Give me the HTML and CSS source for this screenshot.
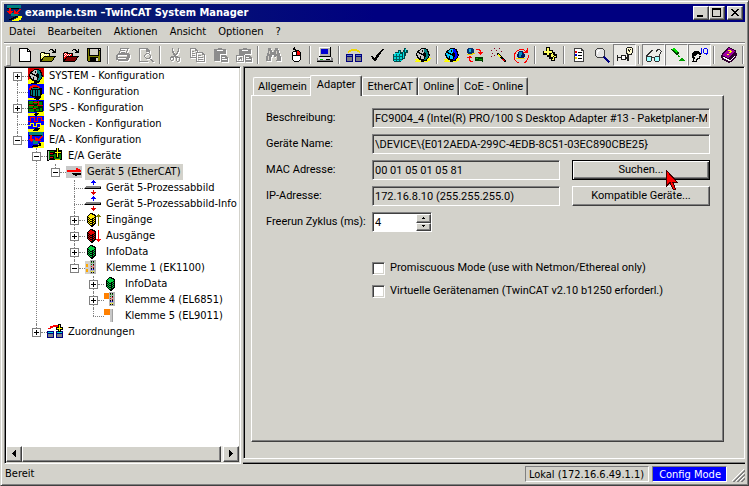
FILE: index.html
```
<!DOCTYPE html>
<html lang="de">
<head>
    <meta charset="UTF-8">
    <meta name="viewport" content="width=device-width, initial-scale=1.0">
    <title>example.tsm - TwinCAT System Manager</title>
    <link rel="stylesheet" href="styles.css">
</head>
<body>
    <!-- Shared icons -->
    <svg class="sprite" aria-hidden="true">
        <symbol id="stack" viewBox="0 0 16 16">
            <path d="M6 1h3v1h2v1h1v9h-1v1h-1v1h-1v1H7v-1H6v-1H5v-1H4v-1H3V4h1V3h1V2h1z" fill="#000"/>
            <path d="M6 2h2v1h2v1h1v1h-1v1H8v1H6V6H5V5H4V4h1V3h1z" fill="currentColor"/>
            <path d="M4 6h1v1h1v1h2v1H6V8H5V7H4zM10 6h1v1h-1v1H9V7h1zM4 8h1v1h1v1h2v1H6v-1H5V9H4zM10 8h1v1h-1v1H9V9h1zM4 10h1v1h1v1h2v1H6v-1H5v-1H4zM10 10h1v1h-1v1H9v-1h1z" fill="currentColor"/>
        </symbol>
        <symbol id="image" viewBox="0 0 16 16">
            <path d="M8 0h1v1h1v1h1v1H9v2H8V3H6V2h1V1h1z" fill="#00f"/>
            <path d="M1 6h15v1h-1v1H0V7h1z" fill="#808080"/>
            <path d="M0 8h15V7h1v2H0z" fill="#000"/>
            <path d="M8 10h1v2h2v1h-1v1H9v1H8v-1H7v-1H6v-1h2z" fill="#e00000"/>
        </symbol>
        <symbol id="gear" viewBox="0 0 16 16">
            <path d="M0 12h4l1 2h6l2-3h3v1h-1v2h-2v1H0v-1h1z" fill="#ff0"/>
            <path d="M6 1h5v1h2v2h1v3h1v2h-1v2h-1v1h-1v2H9v1H6v-2H4v-1H3v-1H2V9H1V6h1V4h1V3h2V2h1z" fill="#000"/>
            <path d="M6 2h3v4H8v3h1v3H6v-1H4v-1H3V8H2V6h1V4h2V3h1z" fill="currentColor"/>
            <path d="M9 2h2v1h1v2h1v3h1v1h-1v2h-1v1h-1v1H9v-1h1v-2h1V6h-1V5H9z" fill="var(--rim)"/>
            <path d="M3 4h1v1h1v1h2v1h1v1H6V7H4V6H3zM7 3h1v2H7zM5 9h1v2H5z" fill="#000"/>
        </symbol>
        <symbol id="folder" viewBox="0 0 16 16">
            <path d="M1 5h4v1h5v3h6v1h-1v1h-1v2h-1v1h-1v1H0V6h1zM9 3h1V2h3v1h1v1h1V2h1v4h-4V5h1V4h-1V3h-2v1H9z" fill="#000"/>
            <path d="M1 6h3v1h5v2H4v1H3v1H2v1H1z" fill="var(--light)"/>
            <path d="M4 10h10v1h-1v2h-1v1H2v-1h1v-2h1z" fill="currentColor"/>
            <path d="M2 6h1v1H2zM1 7h1v1H1zM3 7h1v1H3zM2 8h1v1H2zM5 7h1v1H5zM4 8h1v1H4zM7 7h1v1H7zM6 8h1v1H6zM1 9h1v1H1z" fill="#fff"/>
        </symbol>
        <symbol id="terminal" viewBox="0 0 16 16">
            <path d="M0 1h9v13H0z" fill="#d4d0c8"/>
            <path d="M5 0h6v14H5z" fill="#b4b4b4"/>
            <path d="M6 2h1v1H6zM8 2h1v1H8zM6 4h1v1H6z" fill="#008000"/>
            <path d="M6 6h1v1H6zM8 5h1v1H8zM8 7h1v1H8z" fill="#e00000"/>
            <path d="M6 9h1v1H6zM8 9h1v1H8z" fill="#0000c0"/>
            <path d="M6 11h1v1H6zM8 11h1v1H8z" fill="#ff0"/>
            <path d="M6 1h1v1H6zM8 1h1v1H8zM8 4h1v1H8zM6 8h1v1H6zM8 8h1v1H8zM6 12h1v1H6zM8 12h1v1H8z" fill="#000"/>
        </symbol>
    </svg>

    <div class="window">
        <header class="titlebar">
            <svg class="icon" viewBox="0 0 16 16">
                <rect width="16" height="16" fill="#0a246a"/>
                <path d="M1 0h14v3H1z" fill="#008080"/><path d="M1 3h12v1H1z" fill="#000"/>
                <path d="M5 8h7v3H5z" fill="#008080"/>
                <path d="M3 3h2v3h2v1H6v1H5v1H3V8H2V7H1V6h2zM13 4h2v1h-1v1h-1v1h-1v1h1v1H8V5h1v1h1v1h1V6h1V5h1z" fill="#f00"/>
                <path d="M12 11h4v2h-1v2h-2v1H6v-1h2v-1h2v-1h2z" fill="#ff0"/><path d="M9 11h3v1h-2v1H8v1H6v1H3v-1h2v-1h2v-1h2z" fill="#000"/>
            </svg>
            <h1>example.tsm –TwinCAT System Manager</h1>
            <div class="caption-buttons">
                <button type="button" aria-label="Minimieren"><svg viewBox="0 0 12 10"><path d="M2 7h6v2H2z"/></svg></button>
                <button type="button" aria-label="Maximieren"><svg viewBox="0 0 12 10"><path d="M1 0h9v9H1zM2 2v6h7V2z" fill-rule="evenodd"/></svg></button>
                <button type="button" class="close" aria-label="Schließen"><svg viewBox="0 0 12 10"><path d="M2 1h2v1h1v1h2V2h1V1h2v1H9v1H8v1H7v1h1v1h1v1h1v1H8V7H7V6H5v1H4v1H2V7h1V6h1V5h1V4H4V3H3V2H2z"/></svg></button>
            </div>
        </header>

        <nav class="menubar">
            <a href="#">Datei</a>
            <a href="#">Bearbeiten</a>
            <a href="#">Aktionen</a>
            <a href="#">Ansicht</a>
            <a href="#">Optionen</a>
            <a href="#">?</a>
        </nav>

        <div class="toolbar">
            <button type="button" aria-label="Neu"><svg class="icon" viewBox="0 0 16 16"><path d="M2 1h9v1h1v1h1v1h1v11H2z" fill="#000"/><path d="M3 2h7v3h3v9H3zM11 3h1v1h-1z" fill="#fff"/></svg></button>
            <button type="button" aria-label="Öffnen"><svg class="icon folder-yellow"><use href="#folder"/></svg></button>
            <button type="button" aria-label="Vom Zielsystem öffnen"><svg class="icon folder-red"><use href="#folder"/></svg></button>
            <button type="button" aria-label="Speichern"><svg class="icon" viewBox="0 0 16 16"><path d="M1 1h14v14H2v-1H1z" fill="#000"/><path d="M2 2h1v7h10V4h1v10H2z" fill="#808000"/><path d="M4 2h8v6H4z" fill="#d4d0c8"/><path d="M4 10h8v4H4z" fill="#000"/><path d="M10 11h2v3h-2zM13 2h1v1h-1z" fill="#d4d0c8"/></svg></button>
            <span class="sep"></span>
            <button type="button" aria-label="Drucken" disabled><svg class="icon" viewBox="0 0 16 16"><path d="M5 1h9v1h-1v2h-1v2h2v1h1v4h-1v2h-1v1H3v-1H1V8h1V7h1V6h1V4h1zM6 2v2H5v2h6V4h1V2zM3 8v2h9V8zM3 11v1h8v-1z" fill-rule="evenodd"/><path d="M6 3h4v1H6zM6 5h4v1H6z"/></svg></button>
            <button type="button" aria-label="Seitenansicht" disabled><svg class="icon" viewBox="0 0 16 16"><path d="M1 1h9v1h1v1h1v3h-1V5H8V2H2v12h8v1H1z"/><path d="M8 6h3v1h1v1h1v3h-1v1h2v1h1v1h1v1h-2v-1h-1v-1h-1v-1H8v-1H7V10H6V8h1V7h1zM8 7v1H7v2h1v1h3v-1h1V8h-1V7z" fill-rule="evenodd"/></svg></button>
            <span class="sep"></span>
            <button type="button" aria-label="Ausschneiden" disabled><svg class="icon" viewBox="0 0 16 16"><path d="M5 1h1v3h1v2h1v1h1V6h1V4h1V1h1v4h-1v2h-1v1H9v1h2v1h2v4h-1v1h-2v-1H9v-3H8v-1H7v3H6v1H4v-1H3v-3h1v-1h3V8H6V6H5zM4 11v2h2v-2zM10 11v3h2v-3z" fill-rule="evenodd"/></svg></button>
            <button type="button" aria-label="Kopieren" disabled><svg class="icon" viewBox="0 0 16 16"><path d="M0 1h6v1h1v1h1v2h5v1h1v1h1v8H6v-4H0zM1 2v8h5V5h1V4H5V2zM7 6v8h7V8h-2V6z" fill-rule="evenodd"/><path d="M2 4h2v1H2zM2 6h3v1H2zM2 8h3v1H2zM8 8h3v1H8zM8 10h5v1H8zM8 12h5v1H8z"/></svg></button>
            <button type="button" aria-label="Einfügen" disabled><svg class="icon" viewBox="0 0 16 16"><path d="M1 2h4V1h4v1h4v5H7v7H1zM4 3v1h6V3z" fill-rule="evenodd"/><path d="M8 8h5v1h1v1h1v5H8zM9 10v1h3v-1zM9 12v1h5v-1z" fill-rule="evenodd"/></svg></button>
            <button type="button" aria-label="Mit Verknüpfung einfügen" disabled><svg class="icon" viewBox="0 0 16 16"><path d="M3 2h4V1h4v1h4v5H9v1H3zM6 3v1h6V3z" fill-rule="evenodd"/><path d="M9 8h5v1h1v1h1v5H9zM10 10v1h3v-1zM10 12v1h5v-1zM0 8h8v7H0zM1 9v5h6V9z" fill-rule="evenodd"/><path d="M3 10h3v3H5v-1H4v1H2v-1h1v-1h1z"/></svg></button>
            <span class="sep"></span>
            <button type="button" aria-label="Suchen" disabled><svg class="icon" viewBox="0 0 16 16"><path d="M3 1h3v2h1v2h2V3h1V1h3v2h1v3h1v3h1v5h-5v-4H9V8H7v2H6v4H1V9h1V6h1V3z"/><path d="M4 4h1v3H4zM3 9h1v4H3zM11 4h1v3h-1zM11 9h1v4h-1z" fill="#d4d0c8"/></svg></button>
            <button type="button" aria-label="Kontextmenü"><svg class="icon" viewBox="0 0 16 16"><path d="M6 0h1v2h1v1h3v1h1v1h1v8h-1v1h-1v1H6v-1H5v-1H4V5h1V4h2V3H5V1h1z" fill="#000"/><path d="M6 5h2v3H5V5zM5 9h7v4h-1v1H6v-1H5z" fill="#fff"/><path d="M9 4h2v1h1v3H9z" fill="#f00"/></svg></button>
            <span class="sep"></span>
            <button type="button" aria-label="Zielsystem wählen"><svg class="icon" viewBox="0 0 16 16"><path d="M2 0h12v10H2z" fill="#000"/><path d="M2 0h11v9H2z" fill="#fff"/><path d="M3 1h10v8H3z" fill="#b0b0b0"/><path d="M4 2h7v5H4z" fill="#0000d0"/><path d="M1 10h14v1h1v4H0v-4h1z" fill="#808080"/><path d="M1 10h13v3H1z" fill="#e4e4e4"/><path d="M3 12h3v1H3z" fill="#0c0"/><path d="M9 12h4v1H9zM0 14h16v1H0z" fill="#000"/></svg></button>
            <span class="sep"></span>
            <button type="button" aria-label="Zuordnungen erzeugen"><svg class="icon" viewBox="0 0 16 16"><path d="M2 4h1V3h2V2h6v1h2v1h1v2h-1V5h-2V4H5v1H3v1H2z" fill="#f0d800"/><path d="M0 7h7v8H0zM9 7h7v8H9z" fill="#000080"/><path d="M1 10h5v4H1zM10 10h5v4h-5z" fill="#808080"/><path d="M1 8h5v1H1zM10 8h5v1h-5z" fill="#5a78c0"/></svg></button>
            <button type="button" aria-label="Konfiguration prüfen"><svg class="icon" viewBox="0 0 16 16"><path d="M13 2h2v1h-1v1h-1v1h-1v2h-1v1h-1v2H9v1H8v2H7v1H5v-1H4v-1H3v-2H2V9h2v1h1v1h1v-1h1V8h1V7h1V6h1V5h1V4h1V3h1z" fill="#000"/></svg></button>
            <button type="button" aria-label="Konfiguration aktivieren"><svg class="icon" viewBox="0 0 16 16"><path d="M3 5h3V3h3v2h2V3h1V1h2v2h2v3h-2v3h-1v3h-2v1H9v2H2v-1H1V7h2z" fill="#004848"/><path d="M2 7h8v7H2z" fill="#00d8d8"/><path d="M4 7h1v7H4zM7 7h1v7H7zM2 9h8v1H2zM2 12h8v1H2z" fill="#006060"/><path d="M7 4h1v2H7zM13 2h1v3h-1zM11 5h1v6h-1zM3 6h5v1H3z" fill="#00e0e0"/></svg></button>
            <button type="button" aria-label="Run Modus"><svg class="icon gear-gray"><use href="#gear"/></svg></button>
            <span class="sep"></span>
            <button type="button" aria-label="Config Modus"><svg class="icon gear-blue"><use href="#gear"/></svg></button>
            <button type="button" aria-label="Geräte neu laden"><svg class="icon" viewBox="0 0 16 16"><path d="M1 1h5v1h1v4H6v1H1V6H0V2h1z" fill="#003070"/><path d="M2 2h2v3H2z" fill="#00b0e0"/><path d="M0 7h4l1-1h3v1H6v1H0z" fill="#e0d000"/><path d="M9 2h4v1h1v2h2v1h-1v1h-1v1h-1V7h-1V6h-1V5h2V4h-1V3H9zM3 9h1v1h1v1H3v2h1v1h2v1H3v-1H2v-3H0v-1h2V9z" fill="#f00"/><path d="M8 10h8v5h-1v-1H8z" fill="#004000"/><path d="M9 11h2v1H9zM12 12h3v1h-3z" fill="#0a0"/></svg></button>
            <button type="button" aria-label="Geräte suchen"><svg class="icon" viewBox="0 0 16 16"><path d="M7 6h2v1h1v1h1v1h1v1h1v1h1v1h1v1h1v2h-2v-1h-1v-1h-1v-1h-1v-1h-1v-1H9V9H8V8H7z" fill="#000"/><path d="M8 7h1v1h1v1h1v1H9V9H8z" fill="#ff0"/><path d="M1 3h1v1H1zM4 1h1v1H4zM6 3h1v1H6zM9 1h1v1H9zM2 6h1v1H2zM4 8h1v1H4zM1 9h1v1H1zM11 4h1v1h-1z" fill="#800020"/><path d="M12 12h2v1h1v1h-2v-1h-1z" fill="#e00000"/></svg></button>
            <button type="button" aria-label="Free Run umschalten"><svg class="icon" viewBox="0 0 16 16"><path d="M6 4h4v1h1v2h1v3h-1v1h1v1H4v-1h1v-1H4V7h1V5h1z" fill="#001860"/><path d="M6 5h3v3H8v2H6z" fill="#0090c0"/><path d="M3 11h9v1H3z" fill="#f0d800"/><path d="M13 4.500A7 7 0 1 0 15 8" fill="none" stroke="#f00"/><path d="M15 1v5h-5V5h3V3h1V1z" fill="#f00"/></svg></button>
            <span class="sep"></span>
            <button type="button" aria-label="Boxen hinzufügen"><svg class="icon" viewBox="0 0 16 16"><path d="M4 0h4v3h3v2h2v2h2v4h-2v3H9v-2H7v-2H5V8H1V4h3z" fill="#000"/><path d="M5 1h2v3h3v2H7v2H5V6H2V4h3zM9 7h1V6h1v2h1v1h-1v1H9zM11 10h1V9h2v1h-2v3h-2v-1h1z" fill="#ffff60"/></svg></button>
            <span class="sep"></span>
            <button type="button" aria-label="Eigenschaften"><svg class="icon" viewBox="0 0 16 16"><path d="M3 1h8v1h1v1h1v12H3z" fill="#404040"/><path d="M4 2h6v2h2v10H4z" fill="#fff"/><path d="M7 5h4v1H7zM7 8h4v1H7zM7 11h4v1H7z" fill="#000"/><path d="M4 4h2v2H4z" fill="#e00000"/><path d="M4 7h2v2H4z" fill="#00c"/><path d="M4 10h2v2H4z" fill="#f0d000"/></svg></button>
            <button type="button" aria-label="Lupe"><svg class="icon" viewBox="0 0 16 16"><circle cx="6" cy="6" r="5" fill="#e4e4e4" stroke="#404040"/><path d="M4 3h2v1H5v1H4v2H3V4h1z" fill="#fff"/><path d="M10 9h1v1h1v1h1v1h1v1h1v1h1v1h-1v1h-1v-1h-1v-1h-1v-1h-1v-1h-1v-1H9v-1h1z" fill="#000080"/></svg></button>
            <button type="button" class="pressed" aria-label="Online Werte anzeigen"><svg class="icon" viewBox="0 0 16 16"><path d="M9 1h1V0h5v1h1v5h-1v2h-5V7H9zM10 1v5h1v1h3V6h1V1zM0 8h1v2h3V8h5v2h1V8h2v6h-2v-2H9v1H4v-2H1v3H0zM5 9v3h3V9z" fill="#202020" fill-rule="evenodd"/><path d="M10 1h5v5h-1v1h-3V6h-1z" fill="#fffbd0"/><path d="M5 9h3v3H5z" fill="#fff"/><path d="M11 2h1v2h-1zM13 2h1v1h-1v2h-1V3h1z" fill="#202020"/></svg></button>
            <span class="sep"></span>
            <button type="button" class="pressed" aria-label="Werte beobachten"><svg class="icon" viewBox="0 0 16 16"><path d="M1 9h5v1h3V9h4v1h1v4h-1v1H9v-1H8v-3H6v3H5v1H1v-1H0v-4h1z" fill="#303030"/><path d="M1 10h4v4H1zM9 10h4v4H9z" fill="#a0ffff"/><path d="M0 9V8h1V7h1V6h1V5h1V4h1V3h2v1H6v1H5v1H4v1H3v1H2v1H1v1H0zM14 10V7h1V5h1V4h-1V3h-1V2h-3v1h-1v2h1V4h1V3h2v1h1v1h-1v2h-1v3z" fill="#303030"/></svg></button>
            <button type="button" class="pressed" aria-label="Symbole anzeigen"><svg class="icon" viewBox="0 0 16 16"><path d="M4 1h2v1h1v1h1v1h1v1h1v2H9v1H7V7H6V6H5V5H4V4H3V3H2V2h2z" fill="#004000"/><path d="M4 1h2v1h1v1h1v1h1v1H8v1H7V5H6V4H5V3H3V2h1z" fill="#00e000"/><path d="M9 8h1v1h1v1h-2zM12 11h2v1h1v1h1v1h-6v-1h1v-1h1z" fill="#00a000"/></svg></button>
            <button type="button" class="pressed" aria-label="Expertenansicht"><svg class="icon" viewBox="0 0 16 16"><path d="M2 4h5v1h1v1h1v2H8v1h1v1H8v2H6v1H5v2H0v-1h1v-3H0V6h1V5h1z" fill="#000"/><path d="M5 7h2v1h1v1H7v2H5v1H4v2H2v-2h1v-2H2V9h2V8h1z" fill="#ebeae6"/><path d="M9 1h1v6H9zM12 1h3v1h1v5h-1v1h-1V7h-2V6h-1V2h1zM12 2v4h3V2z" fill="#00f" fill-rule="evenodd"/></svg></button>
            <span class="sep"></span>
            <button type="button" aria-label="Hilfe"><svg class="icon" viewBox="0 0 16 16"><path d="M7 0h2v1h2v1h2v1h2v3h1v3h-1v2h-1v1h-1v1h-1v1h-1v1H9v1H7v-1H5v-1H3v-1H1v-2H0V8h1V6h1V5h1V4h1V3h1V2h1V1h1z" fill="#300030"/><path d="M7 1h2v1h2v1h2v1h1v1h-1v1h-1v1h-1v1h-1v1H9v1H8v1H6v-1H4V9H2V7h1V6h1V5h1V4h1V3h1z" fill="#a000a0"/><path d="M2 10h2v1h2v1h2v1h2v-1h1v-1h1v-1h1V9h1v1h-1v1h-1v1h-1v1h-1v1H7v-1H5v-1H3v-1H2z" fill="#fff"/><path d="M7 3h3v1h1v1h-1v1H8V5h1V4H7zM6 7h2v1H6z" fill="#ff0"/></svg></button>
            <span class="sep"></span>
            <button type="button" aria-label="Weitere Befehle"><svg class="icon" viewBox="0 0 16 16"><path d="M0 2h3v1H1v9h2v1H0z" fill="#000"/></svg></button>
        </div>

        <main class="workspace">
            <section class="tree-pane">
                <ul class="tree">
                    <li>
                        <div class="row"><button type="button" class="plus" aria-label="Aufklappen"></button><i></i>
                            <svg class="icon gear-gray" viewBox="0 0 16 16"><path d="M0 0h16v16H0z" fill="#d80000"/><path d="M7 9h9v7H0v-4z" fill="#ff0"/><use href="#gear"/><path d="M3 15h3v-1h4v-1h2v1h-1v1H9v1H3z" fill="#000"/></svg>
                            <span>SYSTEM - Konfiguration</span></div>
                    </li>
                    <li>
                        <div class="row"><i></i>
                            <svg class="icon" viewBox="0 0 16 16"><path d="M0 0h16v16H0z" fill="#00f"/><path d="M13 10h3v6H0v-2h8z" fill="#ff0"/><path d="M3 3h9v1h2v7h-1v2H4v-1H2V6h1z" fill="#000"/><path d="M4 4h7v1H4zM3 6h1v5H3zM5 6h2v6H5zM8 6h1v6H8zM10 6h2v6h-2z" fill="#008080"/><path d="M1 4h1V2h2V1h5v1h2v1h1v1h-2V3H5v1H3v2H1z" fill="#f00"/><path d="M5 15l3-2h5v1l-3 2z" fill="#000"/></svg>
                            <span>NC - Konfiguration</span></div>
                    </li>
                    <li>
                        <div class="row"><button type="button" class="plus" aria-label="Aufklappen"></button><i></i>
                            <svg class="icon" viewBox="0 0 16 16"><path d="M0 0h16v16H0z" fill="#00f"/><path d="M12 11h4v5H0v-3h8z" fill="#ff0"/><path d="M0 1h15v11H0z" fill="#002800"/><path d="M1 1h4v3H1zM6 1h3v3H6zM11 2h3v3h-3zM1 6h4v2H1zM6 6h4v2H6zM1 9h5v3H1zM8 9h3v2H8zM12 8h2v3h-2z" fill="#008800"/><path d="M5 2h5v1H5zM1 5h5v1H1zM9 5h6v1H9zM5 8h3v1H5zM10 1h1v5h-1z" fill="#e00000"/><path d="M5 15l3-2h3l-2 3z" fill="#000"/></svg>
                            <span>SPS - Konfiguration</span></div>
                    </li>
                    <li>
                        <div class="row"><i></i>
                            <svg class="icon" viewBox="0 0 16 16"><path d="M0 0h16v16H0z" fill="#00f"/><path d="M13 10h3v6H0v-3h8z" fill="#ff0"/><path d="M0 5h2V1h5v4h2V1h5v3h2v1h-3V2h-3v4H6V2H3v4H0z" fill="#f00"/><path d="M0 9h2V7h4v3h2V7h5v2h3v1h-4V8H9v3H5V8H3v2H0z" fill="#ff0"/><path d="M4 15l4-3h4l-3 3z" fill="#000"/></svg>
                            <span>Nocken - Konfiguration</span></div>
                    </li>
                    <li>
                        <div class="row"><button type="button" class="minus" aria-label="Zuklappen"></button><i></i>
                            <svg class="icon" viewBox="0 0 16 16"><path d="M0 0h16v16H0z" fill="#00f"/><path d="M1 0h14v4H1z" fill="#008080"/><path d="M1 3h13v1H1z" fill="#000"/><path d="M5 8h5v4H5z" fill="#008080"/><path d="M2 3h2v4h2v1H5v1H4v1H3V9H2V8H1V7h1zM13 4h2v1h-1v1h-1v1h-1v1h1v1H7V5h1v1h2v1h1V6h1V5h1z" fill="#f00"/><path d="M12 10h4v6H4l3-3h3z" fill="#ff0"/><path d="M3 15l3-2h5v-2h2v3h-2l-3 1z" fill="#000"/></svg>
                            <span>E/A - Konfiguration</span></div>
                        <ul>
                            <li>
                                <div class="row"><button type="button" class="minus" aria-label="Zuklappen"></button><i></i>
                                    <svg class="icon" viewBox="0 0 16 16"><path d="M0 2h15v10H2v1H0z" fill="#000"/><path d="M2 3h12v8H2z" fill="#008000"/><path d="M1 3h1v9H1z" fill="#c0c0c0"/><path d="M3 4h4v3H3zM3 8h4v3H3z" fill="#000"/><path d="M3 5h3v1H3zM3 9h3v1H3z" fill="#e00000"/><path d="M9 0h3v3h3v3h-3v4H9V6H7V3h2z" fill="#000"/><path d="M10 0h1v4h3v1h-3v4h-1V5H8V4h2z" fill="#ff0"/><path d="M8 11h5v1H8z" fill="#e0c000"/></svg>
                                    <span>E/A Geräte</span></div>
                                <ul>
                                    <li>
                                        <div class="row"><button type="button" class="minus" aria-label="Zuklappen"></button><i></i>
                                            <svg class="icon" viewBox="0 0 16 16"><path d="M0 2h16v12H0z" fill="#c8c8c8"/><path d="M1 6h9V4h2v1h2v1h1v2H1z" fill="#f00"/><path d="M6 9h9v2h-4v1h-2v-1H7v-1H6z" fill="#000"/></svg>
                                            <span class="selected">Gerät 5 (EtherCAT)</span></div>
                                        <ul>
                                            <li><div class="row"><i></i><svg class="icon"><use href="#image"/></svg><span>Gerät 5-Prozessabbild</span></div></li>
                                            <li><div class="row"><i></i><svg class="icon"><use href="#image"/></svg><span>Gerät 5-Prozessabbild-Info</span></div></li>
                                            <li>
                                                <div class="row"><button type="button" class="plus" aria-label="Aufklappen"></button><i></i>
                                                    <svg class="icon yellow" viewBox="0 0 16 16"><use href="#stack" x="-1" width="16" height="16"/><path d="M13 2h1v1h1v1h1v1h-2v9h-1V5h-2V4h1V3h1z" fill="#808000"/></svg>
                                                    <span>Eingänge</span></div>
                                            </li>
                                            <li>
                                                <div class="row"><button type="button" class="plus" aria-label="Aufklappen"></button><i></i>
                                                    <svg class="icon red" viewBox="0 0 16 16"><use href="#stack" x="-1" width="16" height="16"/><path d="M13 2h1v9h2v1h-1v1h-1v1h-1v-1h-1v-1h-1v-1h2z" fill="#f00"/></svg>
                                                    <span>Ausgänge</span></div>
                                            </li>
                                            <li>
                                                <div class="row"><button type="button" class="plus" aria-label="Aufklappen"></button><i></i>
                                                    <svg class="icon green" viewBox="0 0 16 16"><use href="#stack" x="-1" width="16" height="16"/></svg>
                                                    <span>InfoData</span></div>
                                            </li>
                                            <li>
                                                <div class="row"><button type="button" class="minus" aria-label="Zuklappen"></button><i></i>
                                                    <svg class="icon" viewBox="0 0 16 16"><use href="#terminal" width="16" height="16"/><path d="M1 4h2v3H1zM1 9h2v3H1z" fill="#ffa800"/></svg>
                                                    <span>Klemme 1 (EK1100)</span></div>
                                                <ul>
                                                    <li>
                                                        <div class="row"><button type="button" class="plus" aria-label="Aufklappen"></button><i></i>
                                                            <svg class="icon green" viewBox="0 0 16 16"><use href="#stack" x="-1" width="16" height="16"/></svg>
                                                            <span>InfoData</span></div>
                                                    </li>
                                                    <li>
                                                        <div class="row"><button type="button" class="plus" aria-label="Aufklappen"></button><i></i>
                                                            <svg class="icon" viewBox="0 0 16 16"><use href="#terminal" width="16" height="16"/><path d="M0 7h5v9H0z" fill="#fff"/><path d="M0 1h5v6H0z" fill="#ff8000"/></svg>
                                                            <span>Klemme 4 (EL6851)</span></div>
                                                    </li>
                                                    <li>
                                                        <div class="row"><i></i>
                                                            <svg class="icon" viewBox="0 0 16 16"><path d="M0 1h6v6H0z" fill="#ff8000"/><path d="M6 1h3v13H6z" fill="#c8c8c8"/><path d="M8 1h1v13H8z" fill="#a0a0a0"/></svg>
                                                            <span>Klemme 5 (EL9011)</span></div>
                                                    </li>
                                                </ul>
                                            </li>
                                        </ul>
                                    </li>
                                </ul>
                            </li>
                            <li>
                                <div class="row"><button type="button" class="plus" aria-label="Aufklappen"></button><i></i>
                                    <svg class="icon" viewBox="0 0 16 16"><path d="M0 7h7v7H0zM9 7h7v7H9z" fill="#000080"/><path d="M1 8h5v1H1zM10 8h5v1h-5z" fill="#00e0e0"/><path d="M1 10h5v3H1zM10 10h5v3h-5z" fill="#808080"/><path d="M1 5V4h2V2h3V1h5v2H6v1H4v1z" fill="#f00"/><path d="M11 0h3v3h2v3h-2v2h-3V6H9V3h2z" fill="#000"/><path d="M12 1h1v3h2v1h-2v2h-1V5h-2V4h2z" fill="#ff0"/></svg>
                                    <span>Zuordnungen</span></div>
                            </li>
                        </ul>
                    </li>
                </ul>
                <div class="scrollbar">
                    <button type="button" aria-label="Nach links"><svg viewBox="0 0 12 12"><path d="M7 2h1v7H7V8H6V7H5V6H4V5h1V4h1V3h1z"/></svg></button>
                    <div class="track"><div class="thumb"></div></div>
                    <button type="button" aria-label="Nach rechts"><svg viewBox="0 0 12 12"><path d="M4 2h1v1h1v1h1v1h1v1H7v1H6v1H5v1H4z"/></svg></button>
                </div>
            </section>

            <div class="detail">
                <section class="detail-pane">
                    <div class="tabs" role="tablist">
                        <button type="button" role="tab">Allgemein</button>
                        <button type="button" role="tab" class="active" aria-selected="true">Adapter</button>
                        <button type="button" role="tab">EtherCAT</button>
                        <button type="button" role="tab">Online</button>
                        <button type="button" role="tab">CoE - Online</button>
                    </div>
                    <form class="page">
                        <label for="beschreibung">Beschreibung:</label>
                        <input class="wide" id="beschreibung" type="text" readonly value="FC9004_4 (Intel(R) PRO/100 S Desktop Adapter #13 - Paketplaner-M">
                        <label for="geraet">Geräte Name:</label>
                        <input class="wide" id="geraet" type="text" readonly value="\DEVICE\{E012AEDA-299C-4EDB-8C51-03EC890CBE25}">
                        <label for="mac">MAC Adresse:</label>
                        <input id="mac" type="text" readonly value="00 01 05 01 05 81">
                        <div class="search">
                            <button type="button" class="push default">Suchen...</button>
                            <svg class="cursor" viewBox="0 0 12 20"><path d="M.5.5v15.500l3.500-3.500 3 6.500h2.500l-2.500-6.500h4.500z" fill="#f00" stroke="#400000"/></svg>
                        </div>
                        <label for="ip">IP-Adresse:</label>
                        <input id="ip" type="text" readonly value="172.16.8.10 (255.255.255.0)">
                        <button type="button" class="push">Kompatible Geräte...</button>
                        <label for="zyklus">Freerun Zyklus (ms):</label>
                        <div class="spinner wide">
                            <input id="zyklus" type="text" value="4">
                            <div class="spin-buttons">
                                <button type="button" aria-label="Erhöhen"><svg viewBox="0 0 5 3"><path d="M2 0h1v1h1v1H1V1h1z"/></svg></button>
                                <button type="button" aria-label="Verringern"><svg viewBox="0 0 5 3"><path d="M1 0h3v1H3v1H2V1H1z"/></svg></button>
                            </div>
                        </div>
                        <div class="checks wide">
                            <label><input type="checkbox"> Promiscuous Mode (use with Netmon/Ethereal only)</label>
                            <label><input type="checkbox"> Virtuelle Gerätenamen (TwinCAT v2.10 b1250 erforderl.)</label>
                        </div>
                    </form>
                </section>
                <div class="log-pane"></div>
            </div>
        </main>

        <footer class="statusbar">
            <span class="message">Bereit</span>
            <span class="cell">Lokal (172.16.6.49.1.1)</span>
            <span class="cell mode">Config Mode</span>
            <svg class="grip" viewBox="0 0 14 14"><path d="M1 13L13 1M5 13l8-8M9 13l4-4" stroke="#fff"/><path d="M2 14L14 2M3 14L14 3M6 14l8-8M7 14l7-7M10 14l4-4M11 14l3-3" stroke="#808080"/></svg>
        </footer>
    </div>
</body>
</html>
```

FILE: styles.css
```
:root {
    --face: #d3d2cb;
    --shadow: #808080;
    --dark: #404040;
    --ui: "DejaVu Sans Condensed", "Liberation Sans", sans-serif;
    --dialog: Roboto, "Liberation Sans", sans-serif;
}

* {
    box-sizing: border-box;
}

body {
    margin: 0;
    font: 11px/16px var(--ui);
    color: #000;
    background: var(--face);
}

button, input {
    font: inherit;
    color: inherit;
    margin: 0;
    padding: 0;
    border: 0;
    border-radius: 0;
    background: none;
}

svg {
    shape-rendering: crispEdges;
    display: block;
    flex: none;
}

.sprite {
    position: absolute;
    width: 0;
    height: 0;
}

.icon {
    width: 16px;
    height: 16px;
}

.gear-gray { color: #c4c4c4; --rim: #008080; }
.gear-blue { color: #00c8ff; --rim: #0000ff; }
.folder-yellow { color: #808000; --light: #ffff60; }
.folder-red { color: #800000; --light: #ff0000; }
.yellow { color: #ffe800; }
.red { color: #e00000; }
.green { color: #00d040; }

.window {
    display: flex;
    flex-direction: column;
    height: 100vh;
    padding: 3px;
    border: 1px solid;
    border-color: var(--face) var(--dark) var(--dark) var(--face);
    box-shadow: inset 1px 1px #fff, inset -1px -1px var(--shadow);
    overflow: hidden;
}

/* Title bar */
.titlebar {
    display: flex;
    align-items: center;
    flex: none;
    height: 18px;
    padding: 0 2px;
    gap: 3px;
    background: linear-gradient(90deg, #0a246a, #000080 50%);
    color: #fff;
}

.titlebar h1 {
    flex: 1;
    margin: 0;
    font-size: 11px;
    line-height: 18px;
    white-space: nowrap;
}

.caption-buttons {
    display: flex;
}

.caption-buttons button {
    width: 16px;
    height: 14px;
    padding: 1px;
}

.caption-buttons svg {
    width: 12px;
    height: 10px;
}

.caption-buttons .close {
    margin-left: 2px;
}

.caption-buttons button,
.scrollbar button,
.thumb,
.spin-buttons button {
    background: var(--face);
    border: 1px solid;
    border-color: #fff var(--dark) var(--dark) #fff;
    box-shadow: inset -1px -1px var(--shadow);
}

/* Menu */
.menubar {
    display: flex;
    flex: none;
    height: 20px;
    line-height: 20px;
}

.menubar a {
    padding: 0 6px;
    color: inherit;
    text-decoration: none;
}

.menubar a:first-child {
    padding-left: 5px;
}

/* Toolbar */
.toolbar {
    display: flex;
    flex: none;
    height: 24px;
    padding-left: 9px;
    border-top: 1px solid var(--shadow);
    box-shadow: inset 0 1px #fff;
    overflow: hidden;
    position: relative;
}

.toolbar::before {
    content: "";
    position: absolute;
    left: 2px;
    top: 3px;
    width: 3px;
    height: 18px;
    border: 1px solid;
    border-color: #fff var(--shadow) var(--shadow) #fff;
}

.toolbar button {
    display: flex;
    flex: none;
    align-items: center;
    justify-content: center;
    width: 23px;
    height: 22px;
    margin-top: 1px;
}

.toolbar button:disabled .icon {
    fill: #8c8c8c;
    filter: drop-shadow(1px 1px 0 #fff);
}

.toolbar .pressed {
    background: #ebeae6;
    border: 1px solid;
    border-color: var(--shadow) #fff #fff var(--shadow);
}

.sep {
    flex: none;
    width: 2px;
    height: 18px;
    margin: 3px 2px 0;
    border-left: 1px solid var(--shadow);
    border-right: 1px solid #fff;
}

/* Workspace */
.workspace {
    display: grid;
    grid-template-columns: 237px minmax(0, 1fr);
    gap: 2px;
    flex: 1;
    min-height: 0;
}

.tree-pane {
    display: flex;
    flex-direction: column;
    min-height: 0;
    border: 1px solid;
    border-color: var(--shadow) #fff #fff var(--shadow);
    box-shadow: inset 1px 1px #000, inset -1px -1px var(--face);
    padding: 1px;
    background: #fff;
}

.tree {
    flex: 1;
    overflow: hidden;
}

.tree, .tree ul {
    margin: 0;
    padding: 0;
    list-style: none;
}

.tree ul {
    margin-left: 19px;
}

.tree li {
    position: relative;
}

/* dotted guide line through the siblings */
.tree li::before {
    content: "";
    position: absolute;
    left: 11px;
    top: 0;
    bottom: 0;
    border-left: 1px dotted var(--shadow);
}

.tree > li:first-child::before {
    top: 8px;
}

.tree li:last-child::before {
    bottom: auto;
    height: 8px;
}

.row {
    display: flex;
    align-items: center;
    height: 16px;
    padding-left: 7px;
    white-space: nowrap;
    position: relative;
}

.row i {
    width: 6px;
    border-top: 1px dotted var(--shadow);
}

.row i:first-child {
    width: 11px;
    margin-left: 4px;
}

.row button {
    width: 9px;
    height: 9px;
    border: 1px solid var(--shadow);
    background: linear-gradient(#000, #000) center / 5px 1px no-repeat #fff;
}

.row .plus {
    background: linear-gradient(#000, #000) center / 5px 1px no-repeat, linear-gradient(#000, #000) center / 1px 5px no-repeat #fff;
}

.row span {
    margin-left: 3px;
    padding: 0 2px;
}

.row .selected {
    background: var(--face);
}

.scrollbar {
    display: flex;
    flex: none;
    height: 16px;
}

.scrollbar button {
    width: 16px;
    padding: 1px;
}

.scrollbar svg {
    width: 12px;
    height: 12px;
}

.track {
    flex: 1;
    padding-right: 2px;
    background: #ebeae6;
}

.thumb {
    height: 16px;
}

/* Detail */
.detail {
    display: flex;
    flex-direction: column;
    gap: 3px;
    min-width: 0;
}

.detail-pane {
    display: flex;
    flex-direction: column;
    flex: 1;
    padding: 8px 20px 16px 7px;
    border: 1px solid;
    border-color: var(--shadow) #fff #fff var(--shadow);
    box-shadow: inset 1px 1px #000;
    font-family: var(--dialog);
}

.log-pane {
    height: 2px;
    border-top: 1px solid var(--shadow);
    border-bottom: 1px solid #000;
}

.tabs {
    display: flex;
    align-items: flex-end;
    padding-left: 2px;
    height: 20px;
}

.tabs button {
    height: 18px;
    padding: 0 4px;
    border: 1px solid;
    border-color: #fff var(--dark) transparent #fff;
    border-bottom: 0;
    border-radius: 2px 2px 0 0;
    box-shadow: inset -1px 0 var(--shadow);
}

.tabs .active {
    height: 21px;
    margin: 0 0 -1px -2px;
    padding: 0 6px 3px;
    background: var(--face);
    position: relative;
}

.page {
    flex: 1;
    display: grid;
    grid-template-columns: 94px minmax(0, 188fr) minmax(0, 138fr);
    grid-auto-rows: 20px;
    align-content: start;
    align-items: center;
    gap: 6px 12px;
    padding: 12px 13px 12px 14px;
    border: 1px solid;
    border-color: #fff var(--dark) var(--dark) #fff;
    box-shadow: inset -1px -1px var(--shadow);
}

.page label {
    white-space: nowrap;
}

.page .wide {
    grid-column: 2 / 4;
}

.page > input,
.spinner {
    width: 100%;
    height: 20px;
    padding: 1px 2px 0;
    border: 1px solid;
    border-color: var(--shadow) #fff #fff var(--shadow);
    box-shadow: inset 1px 1px var(--dark);
}

.push {
    display: block;
    width: 100%;
    height: 20px;
    border: 1px solid;
    border-color: #fff var(--dark) var(--dark) #fff;
    box-shadow: inset -1px -1px var(--shadow);
}

.push.default {
    border-color: #000;
    box-shadow: inset 1px 1px #fff, inset -1px -1px var(--dark), inset -2px -2px var(--shadow);
}

.search {
    position: relative;
}

.cursor {
    position: absolute;
    left: 94px;
    top: 10px;
    width: 12px;
    height: 20px;
    z-index: 1;
}

.spinner {
    display: flex;
    width: 60px;
    padding: 1px 0 0 1px;
    background: #fff;
}

.spinner input {
    flex: 1;
    min-width: 0;
    padding-left: 1px;
}

.spin-buttons {
    display: flex;
    flex-direction: column;
    width: 15px;
}

.spin-buttons button {
    display: flex;
    flex: 1;
    align-items: center;
    justify-content: center;
    min-height: 0;
}

.spin-buttons svg {
    width: 5px;
    height: 3px;
}

.checks {
    display: flex;
    flex-direction: column;
    align-self: start;
    gap: 7px;
    padding-top: 22px;
}

.checks label {
    display: flex;
    align-items: center;
    gap: 5px;
}

.checks input {
    appearance: none;
    width: 13px;
    height: 13px;
    background: #fff;
    border: 1px solid;
    border-color: var(--shadow) #fff #fff var(--shadow);
    box-shadow: inset 1px 1px var(--dark), inset -1px -1px var(--face);
}

/* Status bar */
.statusbar {
    display: flex;
    flex: none;
    gap: 3px;
    height: 18px;
    padding: 2px 0 0 1px;
}

.message {
    flex: 1;
}

.cell {
    height: 16px;
    padding: 0 4px 0 3px;
    border: 1px solid;
    border-color: var(--shadow) #fff #fff var(--shadow);
}

.mode {
    padding: 0 5px 0 6px;
    background: #00f;
    color: #fff;
}

.grip {
    width: 14px;
    height: 14px;
    margin: 2px 0 0 1px;
}
```
